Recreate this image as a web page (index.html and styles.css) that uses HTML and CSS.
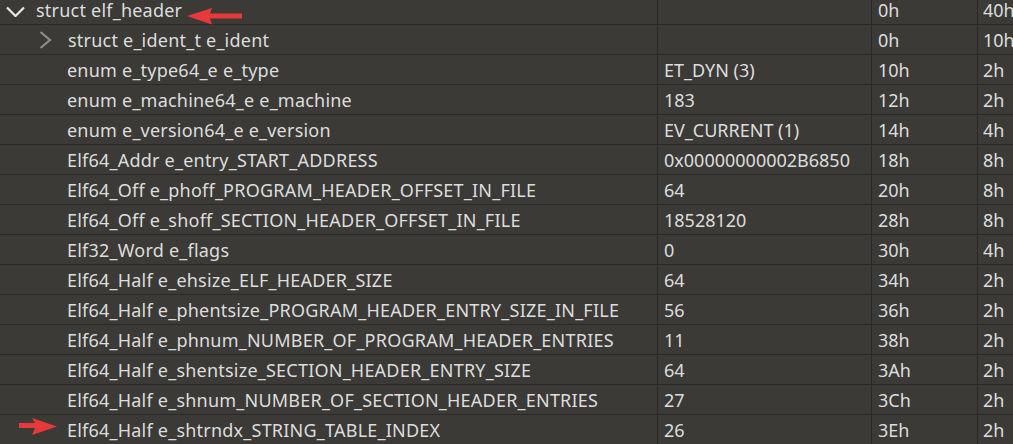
FILE: index.html
```html
<!DOCTYPE html>
<html>
<head>
<meta charset="utf-8">
<link rel="stylesheet" href="styles.css">
</head>
<body>
<div class="tree">
  <div class="row first">
    <div class="cell name lvl0"><span class="chev down"><svg width="19" height="11" viewBox="0 0 19 11"><path d="M1 1.5 L9.5 10 L18 1.5" fill="none" stroke="#e8e8e8" stroke-width="2.2"/></svg></span>struct elf_header</div>
    <div class="cell val"></div><div class="cell start">0h</div><div class="cell size">40h</div>
  </div>
  <div class="row">
    <div class="cell name lvl1"><span class="chev right"><svg width="13" height="18" viewBox="0 0 13 18"><path d="M1.5 1 L11 9 L1.5 17" fill="none" stroke="#8c8c8c" stroke-width="2.2"/></svg></span>struct e_ident_t e_ident</div>
    <div class="cell val"></div><div class="cell start">0h</div><div class="cell size">10h</div>
  </div>
  <div class="row"><div class="cell name leaf">enum e_type64_e e_type</div><div class="cell val">ET_DYN (3)</div><div class="cell start">10h</div><div class="cell size">2h</div></div>
  <div class="row"><div class="cell name leaf">enum e_machine64_e e_machine</div><div class="cell val">183</div><div class="cell start">12h</div><div class="cell size">2h</div></div>
  <div class="row"><div class="cell name leaf">enum e_version64_e e_version</div><div class="cell val">EV_CURRENT (1)</div><div class="cell start">14h</div><div class="cell size">4h</div></div>
  <div class="row"><div class="cell name leaf">Elf64_Addr e_entry_START_ADDRESS</div><div class="cell val">0x00000000002B6850</div><div class="cell start">18h</div><div class="cell size">8h</div></div>
  <div class="row"><div class="cell name leaf">Elf64_Off e_phoff_PROGRAM_HEADER_OFFSET_IN_FILE</div><div class="cell val">64</div><div class="cell start">20h</div><div class="cell size">8h</div></div>
  <div class="row"><div class="cell name leaf">Elf64_Off e_shoff_SECTION_HEADER_OFFSET_IN_FILE</div><div class="cell val">18528120</div><div class="cell start">28h</div><div class="cell size">8h</div></div>
  <div class="row"><div class="cell name leaf">Elf32_Word e_flags</div><div class="cell val">0</div><div class="cell start">30h</div><div class="cell size">4h</div></div>
  <div class="row"><div class="cell name leaf">Elf64_Half e_ehsize_ELF_HEADER_SIZE</div><div class="cell val">64</div><div class="cell start">34h</div><div class="cell size">2h</div></div>
  <div class="row"><div class="cell name leaf">Elf64_Half e_phentsize_PROGRAM_HEADER_ENTRY_SIZE_IN_FILE</div><div class="cell val">56</div><div class="cell start">36h</div><div class="cell size">2h</div></div>
  <div class="row"><div class="cell name leaf">Elf64_Half e_phnum_NUMBER_OF_PROGRAM_HEADER_ENTRIES</div><div class="cell val">11</div><div class="cell start">38h</div><div class="cell size">2h</div></div>
  <div class="row"><div class="cell name leaf">Elf64_Half e_shentsize_SECTION_HEADER_ENTRY_SIZE</div><div class="cell val">64</div><div class="cell start">3Ah</div><div class="cell size">2h</div></div>
  <div class="row"><div class="cell name leaf">Elf64_Half e_shnum_NUMBER_OF_SECTION_HEADER_ENTRIES</div><div class="cell val">27</div><div class="cell start">3Ch</div><div class="cell size">2h</div></div>
  <div class="row"><div class="cell name leaf">Elf64_Half e_shtrndx_STRING_TABLE_INDEX</div><div class="cell val">26</div><div class="cell start">3Eh</div><div class="cell size">2h</div></div>
</div>
<svg class="arrow arrow-top" width="56" height="18" viewBox="0 0 56 18">
  <path d="M55 5.5 L23 5.5 L25 0 L0 8 L25 16.5 L23 10.5 L55 10.5 Z" fill="#e8393a"/>
</svg>
<svg class="arrow arrow-bottom" width="40" height="18" viewBox="0 0 40 18">
  <path d="M0 5 L16 5 L13 0 L38 8.5 L13 17 L16 10 L0 10 Z" fill="#e8393a"/>
</svg>
</body>
</html>
```
FILE: styles.css
```css
html, body {
  margin: 0;
  padding: 0;
  background: #3b3a36;
  overflow: hidden;
}
body {
  position: relative;
  width: 1013px;
  height: 444px;
  font-family: "Noto Sans", "Open Sans", sans-serif;
  font-size: 18px;
  color: #dddddd;
}
.row {
  display: grid;
  grid-template-columns: 658px 214px 106px 1fr;
  height: 30px;
  box-sizing: border-box;
  border-bottom: 1px solid #2a2926;
}
.row.first {
  height: 25px;
}
.cell {
  box-sizing: border-box;
  border-right: 1px solid #2a2926;
  line-height: 29px;
  padding-top: 1px;
  white-space: nowrap;
  overflow: hidden;
  display: flex;
  align-items: flex-start;
}
.row.first .cell {
  line-height: 20px;
  padding-top: 0;
}
.name { letter-spacing: 0.22px; }
.cell.size { border-right: none; padding-left: 5px; }
.cell.val, .cell.start { padding-left: 6px; }
.name.lvl0 { padding-left: 6px; }
.name.lvl1 { padding-left: 39px; }
.name.leaf { padding-left: 67px; }
.chev { display: inline-flex; flex: none; }
.chev.down { width: 30px; margin-top: 6px; }
.chev.right { width: 29px; margin-top: 5px; }
.arrow { position: absolute; }
.arrow-top { left: 187px; top: 8px; }
.arrow-bottom { left: 19px; top: 418px; }
```
